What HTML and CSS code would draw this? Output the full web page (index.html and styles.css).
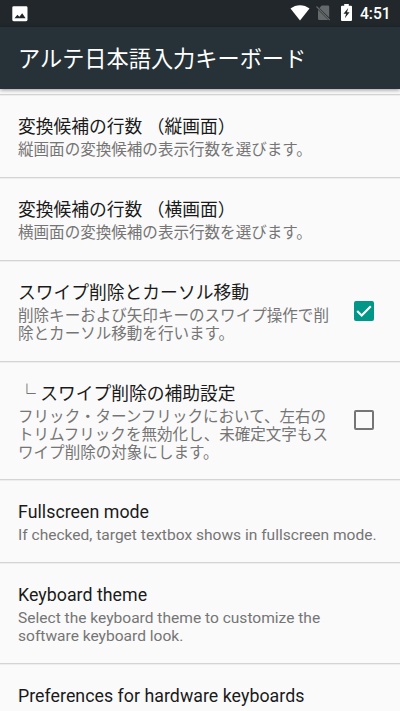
FILE: index.html
```html
<!DOCTYPE html>
<html lang="ja">
<head>
<meta charset="utf-8">
<title>アルテ日本語入力キーボード</title>
<link rel="stylesheet" href="styles.css">
</head>
<body>
<div class="screen">
  <div class="status">
    <svg class="photo" width="16" height="16" viewBox="0 0 16 16"><rect x=".3" y=".3" width="15.2" height="14.9" rx="1.4" fill="#fff"/><path d="M2.500 12.200 5.400 8.800l2 1.900 2.800-3.400 3.400 4.900z" fill="#21272a"/></svg>
    <svg class="wifi" width="20" height="16" viewBox="0 0 20 16"><path d="M.5 3.600C6-1 14-1 19.500 3.600L10 15.500z" fill="#fff"/></svg>
    <svg class="sim" width="15" height="16" viewBox="0 0 15 16"><path d="M5.700.6H12q1.200 0 1.200 1.200v10.600L3.400 2.900zM2 4.700 12.300 15H3.200Q2 15 2 13.800z" fill="#64696b"/><path d="M.5 1.500 13.700 15" stroke="#64696b" stroke-width="1.200"/></svg>
    <svg class="battery" width="11" height="17" viewBox="0 0 11 17"><path d="M3.200 0h4.600v1.700H10q1 0 1 1V16q0 1-1 1H1q-1 0-1-1V2.700q0-1 1-1h2.200z" fill="#fff"/><path d="M7.200 4 2.500 9.700h2.600L3.800 14.200l4.800-6H6z" fill="#21272a"/></svg>
    <span class="clock">4:51</span>
  </div>
  <header class="bar"><h1>アルテ日本語入力キーボード</h1></header>
  <main class="list">
    <section class="row one"><div class="text"><h2>変換候補の行数 （縦画面）</h2><p>縦画面の変換候補の表示行数を選びます。</p></div></section>
    <section class="row one"><div class="text"><h2>変換候補の行数 （横画面）</h2><p>横画面の変換候補の表示行数を選びます。</p></div></section>
    <section class="row two"><div class="text"><h2>スワイプ削除とカーソル移動</h2><p>削除キーおよび矢印キーのスワイプ操作で削<br>除とカーソル移動を行います。</p></div>
      <svg class="check" width="20" height="20" viewBox="0 0 20 20"><rect width="20" height="20" rx="2" fill="#009688"/><path d="m3.200 10 4.500 4.400L16.800 5.300" fill="none" stroke="#fff" stroke-width="2.100"/></svg></section>
    <section class="row three"><div class="text"><h2><span class="branch">└</span> スワイプ削除の補助設定</h2><p>フリック・ターンフリックにおいて、左右の<br>トリムフリックを無効化し、未確定文字もス<br>ワイプ削除の対象にします。</p></div>
      <svg class="check" width="20" height="20" viewBox="0 0 20 20"><rect x="1" y="1" width="18" height="18" rx="1" fill="none" stroke="#757575" stroke-width="2"/></svg></section>
    <section class="row one"><div class="text"><h2 class="latin">Fullscreen mode</h2><p>If checked, target textbox shows in fullscreen mode.</p></div></section>
    <section class="row two"><div class="text"><h2 class="latin">Keyboard theme</h2><p>Select the keyboard theme to customize the<br>software keyboard look.</p></div></section>
    <section class="row one"><div class="text"><h2 class="latin">Preferences for hardware keyboards</h2></div></section>
  </main>
</div>
</body>
</html>
```
FILE: styles.css
```css
* { box-sizing: border-box; }
body, h1, h2, p { margin: 0; font-weight: 400; }
body { font-family: Roboto, "Noto Sans CJK JP", sans-serif; background: #fafafa; }
.screen { width: 400px; height: 711px; overflow: hidden; display: flex; flex-direction: column; }
.status { height: 27px; flex: none; background: #21272a; display: flex; align-items: flex-start; padding: 0 10px 0 12px; }
.status svg { flex: none; }
.photo { margin-top: 6px; }
.wifi { margin: 5px 0 0 auto; }
.sim { margin: 5px 0 0 6px; }
.battery { margin: 4px 0 0 10px; }
.clock { margin-left: 8px; width: 30px; font-size: 15.600px; font-weight: 500; line-height: 28px; color: #fff; white-space: nowrap; }
.bar { height: 62px; flex: none; background: #263238; display: flex; align-items: center; padding: 1px 0 0 18px; box-shadow: 0 1px 4px rgba(0,0,0,.4); z-index: 1; }
.bar h1 { font-size: 22.200px; line-height: 30px; color: #fff; white-space: nowrap; }
.list { padding-top: 5px; }
.row { display: flex; align-items: flex-start; justify-content: space-between; border-top: 1px solid #d4d4d4; box-shadow: inset 0 1px #eee; padding: 20px 26px 0 18px; }
.one { height: 83px; }
.two { height: 101px; }
.three { height: 118px; }
.row h2 { font-size: 17.780px; line-height: 24px; color: #1a1a1a; white-space: nowrap; }
.row .latin { letter-spacing: .03px; }
.row p { font-size: 15.560px; line-height: 18px; margin-top: 2px; color: #757575; white-space: nowrap; }
.check { flex: none; align-self: center; margin-top: -21px; }
.branch { color: #555; font-weight: 300; }
```
